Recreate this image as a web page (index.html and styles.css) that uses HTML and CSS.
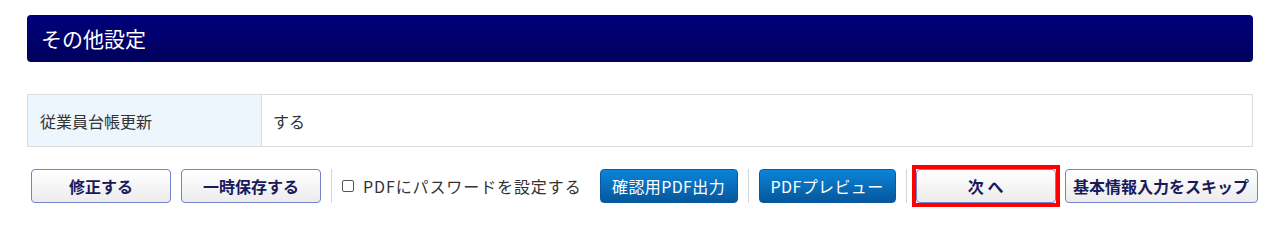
FILE: index.html
```html
<!DOCTYPE html>
<html lang="ja">
<head>
<meta charset="utf-8">
<title>その他設定</title>
<link rel="stylesheet" href="styles.css">
</head>
<body>
<div class="page">
  <h2 class="section-title">その他設定</h2>
  <table class="info-table">
    <tr>
      <th>従業員台帳更新</th>
      <td>する</td>
    </tr>
  </table>
  <div class="actions">
    <button class="btn btn-light btn-w140">修正する</button>
    <button class="btn btn-light btn-w140">一時保存する</button>
    <span class="sep"></span>
    <label class="check"><input type="checkbox" class="check-box"><span>PDFにパスワードを設定する</span></label>
    <button class="btn btn-blue btn-w138">確認用PDF出力</button>
    <span class="sep"></span>
    <button class="btn btn-blue btn-w137">PDFプレビュー</button>
    <span class="sep"></span>
    <span class="focus-frame"><button class="btn btn-light btn-w140">次 へ</button></span>
    <button class="btn btn-light btn-w193">基本情報入力をスキップ</button>
  </div>
</div>
</body>
</html>
```
FILE: styles.css
```css
* { box-sizing: border-box; }
html, body {
  margin: 0;
  padding: 0;
  background: #fff;
  font-family: "Noto Sans CJK JP", "Noto Sans", sans-serif;
  color: #333;
}
.page {
  padding: 15px 27px 14px 27px;
}
.section-title {
  margin: 0;
  height: 47px;
  border-radius: 4px;
  background: linear-gradient(#00007c, #00005c);
  color: #fff;
  font-size: 21px;
  font-weight: normal;
  line-height: 47px;
  padding-left: 14px;
}
.info-table {
  margin-top: 32px;
  width: 100%;
  border-collapse: collapse;
}
.info-table th,
.info-table td {
  border: 1px solid #dcdcdc;
  height: 52px;
  font-weight: normal;
  text-align: left;
  padding: 0 11px;
  font-size: 16px;
  color: #333;
}
.info-table th {
  width: 234px;
  background: #edf5fd;
  padding-left: 12px;
}
.actions {
  margin-top: 18px;
  padding-left: 4px;
  display: flex;
  align-items: center;
  gap: 10px;
}
.actions > * {
  flex-shrink: 0;
  white-space: nowrap;
}
.btn {
  height: 34px;
  border-radius: 4px;
  font-family: "Noto Sans CJK JP", "Noto Sans", sans-serif;
  font-size: 16px;
  padding: 0;
  cursor: pointer;
}
.btn-w140 { width: 140px; }
.btn-w138 { width: 138px; }
.btn-w137 { width: 137px; }
.btn-w193 { width: 193px; }
.btn-light {
  border: 1px solid #7483cc;
  background: linear-gradient(#ffffff, #ececec);
  color: #1a1a5a;
  font-weight: bold;
}
.btn-blue {
  border: 1px solid #0a5aa0;
  background: linear-gradient(#0b84d8, #05579c);
  color: #fff;
  font-weight: normal;
  letter-spacing: 0.4px;
}
.focus-frame {
  display: flex;
  border: 4px solid #ff0000;
  margin: 0 -5px 0 -5px;
}
.sep {
  width: 1px;
  height: 34px;
  background: #d4d4d4;
}
.check {
  display: flex;
  align-items: center;
  gap: 9px;
  font-size: 16px;
  letter-spacing: 0.9px;
  color: #333;
  margin-right: 8px;
}
.check-box {
  appearance: none;
  -webkit-appearance: none;
  width: 12px;
  height: 12px;
  margin: 0;
  border: 1px solid #555;
  border-radius: 2px;
  background: #fff;
}
```
